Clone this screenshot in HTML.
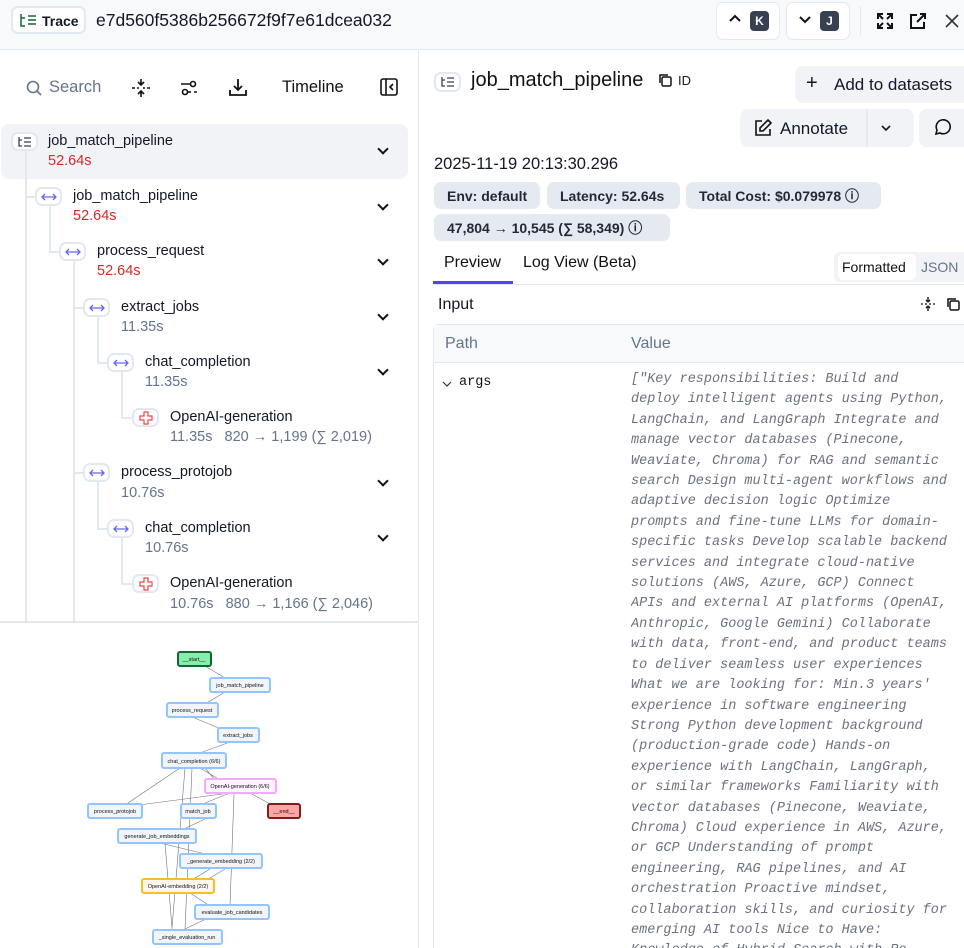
<!DOCTYPE html>
<html style="width:964px;height:948px;overflow:hidden"><head><meta charset="utf-8"><style>
*{box-sizing:border-box;margin:0;padding:0}
body{width:964px;height:948px;overflow:hidden;background:#fff;font-family:"Liberation Sans",sans-serif;color:#111827;position:relative}
.a{position:absolute;white-space:nowrap}
.ib{position:absolute;width:27px;height:19px;border:2px solid #e2e8f0;border-radius:7px;background:#fff;display:flex;align-items:center;justify-content:center}
.nm{font-size:14.5px;color:#111827}
.red{font-size:14.5px;color:#dc2626}
.gr{font-size:14.5px;color:#64748b}
.vl{position:absolute;width:1.5px;background:#e2e8f0}
.hl{position:absolute;height:1.5px;background:#e2e8f0}
.chev{position:absolute;width:8px;height:8px;border-right:2px solid #111;border-bottom:2px solid #111;transform:rotate(45deg)}
.badge{position:absolute;height:27px;background:#e5e9f0;border-radius:7px;font-size:14px;font-weight:bold;color:#1f2937;display:flex;align-items:center;padding-left:13px}
.code{position:absolute;left:631px;top:370px;height:578px;overflow:hidden;font-family:"Liberation Mono",monospace;font-style:italic;font-size:13.5px;line-height:20.4px;color:#6b7280;white-space:pre}
</style></head><body>
<!-- header -->
<div class="a" style="left:0;top:0;width:964px;height:50px;background:#f8f9fb;border-bottom:1px solid #e2e8f0"></div>
<div class="a" style="left:11px;top:6px;width:75px;height:28px;border:2px solid #e2e8f0;border-radius:7px;background:#fff;font-size:14px;font-weight:bold;padding:5px 0 0 29px">Trace</div>
<svg class="a" style="left:19px;top:14px" width="18" height="13" viewBox="0 0 18 13" fill="none" stroke="#166534" stroke-width="1.5"><path d="M2 0v12h4M2 4h4M9 2h8M9 6h8M9 10h8"/></svg>
<div class="a" style="left:96px;top:10px;font-size:17.5px">e7d560f5386b256672f9f7e61dcea032</div>
<div class="a" style="left:716px;top:2px;width:64px;height:38px;border:1px solid #e2e8f0;border-radius:7px;background:#fff"></div>
<div class="a" style="left:786px;top:2px;width:64px;height:38px;border:1px solid #e2e8f0;border-radius:7px;background:#fff"></div>
<svg class="a" style="left:728px;top:14px" width="14" height="10"><path d="M2 7l5-5 5 5" stroke="#111" stroke-width="2" fill="none"/></svg>
<svg class="a" style="left:798px;top:14px" width="14" height="10"><path d="M2 3l5 5 5-5" stroke="#111" stroke-width="2" fill="none"/></svg>
<div class="a" style="left:750px;top:11px;width:19px;height:20px;background:#374151;border-radius:4px;color:#fff;font-size:12px;font-weight:bold;text-align:center;line-height:20px">K</div>
<div class="a" style="left:820px;top:11px;width:19px;height:20px;background:#374151;border-radius:4px;color:#fff;font-size:12px;font-weight:bold;text-align:center;line-height:20px">J</div>
<div class="a" style="left:860px;top:6px;width:1px;height:29px;background:#e2e8f0"></div>
<svg class="a" style="left:876px;top:12px" width="18" height="18" fill="none" stroke="#111" stroke-width="2"><path d="M2 7V2h5M2 2l5 5M16 7V2h-5M16 2l-5 5M2 11v5h5M2 16l5-5M16 11v5h-5M16 16l-5-5"/></svg>
<svg class="a" style="left:909px;top:12px" width="18" height="18" fill="none" stroke="#111" stroke-width="2"><path d="M8 3H2v13h13v-6M11 2h5v5M16 2l-8 8"/></svg>
<svg class="a" style="left:945px;top:14px" width="14" height="14" stroke="#333" stroke-width="1.6"><path d="M1 1l12 12M13 1L1 13"/></svg>
<div class="a" style="left:418px;top:50px;width:1px;height:898px;background:#e2e8f0"></div>

<!-- left toolbar -->
<svg class="a" style="left:26px;top:80px" width="16" height="16" fill="none" stroke="#64748b" stroke-width="1.6"><circle cx="7" cy="7" r="5.5"/><path d="M11 11l4 4"/></svg>
<div class="a" style="left:49px;top:78px;font-size:16.5px;color:#64748b">Search</div>
<svg class="a" style="left:131px;top:78px" width="20" height="20" fill="none" stroke="#111" stroke-width="1.6"><path d="M10 1v6M7 4l3 3 3-3M10 19v-6M7 16l3-3 3 3M1 10h3M6 10h2M12 10h2M16 10h3"/></svg>
<svg class="a" style="left:180px;top:79px" width="18" height="18" fill="none" stroke="#111" stroke-width="1.6"><path d="M1 5h9M14 13h3"/><circle cx="13" cy="5" r="2.5"/><circle cx="5" cy="13" r="2.5"/><path d="M8 13h3"/></svg>
<svg class="a" style="left:229px;top:78px" width="18" height="18" fill="none" stroke="#111" stroke-width="1.8"><path d="M9 1v11M5 8l4 4 4-4M1 12v5h16v-5"/></svg>
<div class="a" style="left:282px;top:78px;font-size:16.5px;color:#111">Timeline</div>
<svg class="a" style="left:380px;top:78px" width="19" height="19" fill="none" stroke="#111" stroke-width="1.6"><rect x="1" y="1" width="16" height="16" rx="2"/><path d="M6 1v16M13 6l-3 3 3 3"/></svg>

<!-- tree -->
<div class="a" style="left:1px;top:124px;width:407px;height:55px;background:#f1f3f6;border-radius:8px"></div>
<div class="vl" style="left:25px;top:150px;height:471px"></div>
<div class="hl" style="left:25px;top:196px;width:10px"></div>
<div class="vl" style="left:49px;top:205px;height:46px"></div>
<div class="hl" style="left:49px;top:251px;width:11px"></div>
<div class="vl" style="left:73px;top:260px;height:361px"></div>
<div class="hl" style="left:73px;top:307px;width:11px"></div>
<div class="hl" style="left:73px;top:472px;width:11px"></div>
<div class="vl" style="left:97px;top:316px;height:46px"></div>
<div class="hl" style="left:97px;top:362px;width:11px"></div>
<div class="vl" style="left:121px;top:371px;height:46px"></div>
<div class="hl" style="left:121px;top:417px;width:11px"></div>
<div class="vl" style="left:97px;top:481px;height:47px"></div>
<div class="hl" style="left:97px;top:528px;width:11px"></div>
<div class="vl" style="left:121px;top:537px;height:46px"></div>
<div class="hl" style="left:121px;top:583px;width:11px"></div>

<div class="ib" style="left:11px;top:132px"><svg width="14" height="10" fill="none" stroke="#334155" stroke-width="1.3"><path d="M1 0v9h3M1 3h3M6 1h7M6 5h7M6 9h7"/></svg></div>
<div class="a nm" style="left:48px;top:133px">job_match_pipeline</div>
<div class="a red" style="left:48px;top:153px">52.64s</div>

<div class="ib" style="left:35px;top:187px"><svg width="16" height="8" fill="none" stroke="#6366f1" stroke-width="1.3"><path d="M1 4h14M4 1L1 4l3 3M12 1l3 3-3 3"/></svg></div>
<div class="a nm" style="left:73px;top:188px">job_match_pipeline</div>
<div class="a red" style="left:73px;top:208px">52.64s</div>

<div class="ib" style="left:59px;top:242px"><svg width="16" height="8" fill="none" stroke="#6366f1" stroke-width="1.3"><path d="M1 4h14M4 1L1 4l3 3M12 1l3 3-3 3"/></svg></div>
<div class="a nm" style="left:97px;top:243px">process_request</div>
<div class="a red" style="left:97px;top:263px">52.64s</div>

<div class="ib" style="left:83px;top:298px"><svg width="16" height="8" fill="none" stroke="#6366f1" stroke-width="1.3"><path d="M1 4h14M4 1L1 4l3 3M12 1l3 3-3 3"/></svg></div>
<div class="a nm" style="left:121px;top:299px">extract_jobs</div>
<div class="a gr" style="left:121px;top:319px">11.35s</div>

<div class="ib" style="left:107px;top:353px"><svg width="16" height="8" fill="none" stroke="#6366f1" stroke-width="1.3"><path d="M1 4h14M4 1L1 4l3 3M12 1l3 3-3 3"/></svg></div>
<div class="a nm" style="left:145px;top:354px">chat_completion</div>
<div class="a gr" style="left:145px;top:374px">11.35s</div>

<div class="ib" style="left:132px;top:408px"><svg width="14" height="14" fill="none" stroke="#ef4444" stroke-width="1.2"><path d="M5 1h4v4h4v4H9v4H5V9H1V5h4z"/></svg></div>
<div class="a nm" style="left:170px;top:409px">OpenAI-generation</div>
<div class="a gr" style="left:170px;top:429px">11.35s &nbsp;&nbsp;820 → 1,199 (∑ 2,019)</div>

<div class="ib" style="left:83px;top:463px"><svg width="16" height="8" fill="none" stroke="#6366f1" stroke-width="1.3"><path d="M1 4h14M4 1L1 4l3 3M12 1l3 3-3 3"/></svg></div>
<div class="a nm" style="left:121px;top:464px">process_protojob</div>
<div class="a gr" style="left:121px;top:485px">10.76s</div>

<div class="ib" style="left:107px;top:519px"><svg width="16" height="8" fill="none" stroke="#6366f1" stroke-width="1.3"><path d="M1 4h14M4 1L1 4l3 3M12 1l3 3-3 3"/></svg></div>
<div class="a nm" style="left:145px;top:520px">chat_completion</div>
<div class="a gr" style="left:145px;top:540px">10.76s</div>

<div class="ib" style="left:132px;top:574px"><svg width="14" height="14" fill="none" stroke="#ef4444" stroke-width="1.2"><path d="M5 1h4v4h4v4H9v4H5V9H1V5h4z"/></svg></div>
<div class="a nm" style="left:170px;top:575px">OpenAI-generation</div>
<div class="a gr" style="left:170px;top:596px">10.76s &nbsp;&nbsp;880 → 1,166 (∑ 2,046)</div>

<div class="chev" style="left:379px;top:145px"></div>
<div class="chev" style="left:379px;top:201px"></div>
<div class="chev" style="left:379px;top:256px"></div>
<div class="chev" style="left:379px;top:311px"></div>
<div class="chev" style="left:379px;top:366px"></div>
<div class="chev" style="left:379px;top:477px"></div>
<div class="chev" style="left:379px;top:532px"></div>
<div class="a" style="left:0;top:621px;width:418px;height:2px;background:#e2e8f0"></div>

<!-- graph -->
<svg class="a" style="left:0;top:623px" width="418" height="325" font-family="Liberation Sans" font-size="5.5" text-anchor="middle">
<g stroke="#6b7280" stroke-width="0.6" fill="none">
<path d="M205 43l20 12M225 69l-20 12M192 94l27 11M230 119l-30 11M200 145l20 12M215 157l-10-12M180 145l-55 37M230 170l-91 12M230 170l-30 12M250 170l22 12M205 196l-25 12M160 220l50 12M225 246l-20 12M210 246l-20 12M190 270l20 13M230 283l4-112M165 220l8 97M185 145l-13 160M192 145l-7 162M210 294l-25 12"/>
</g>
<g stroke-width="2">
<rect x="178" y="29" width="33" height="14" rx="2" fill="#86efac" stroke="#166534"/>
<rect x="210" y="55" width="60" height="14" rx="2" fill="#f1f5f9" stroke="#93c5fd"/>
<rect x="167" y="80" width="51" height="14" rx="2" fill="#f1f5f9" stroke="#93c5fd"/>
<rect x="218" y="105" width="41" height="14" rx="2" fill="#f1f5f9" stroke="#93c5fd"/>
<rect x="162" y="130" width="64" height="15" rx="2" fill="#f1f5f9" stroke="#93c5fd"/>
<rect x="205" y="156" width="71" height="14" rx="2" fill="#fdf4ff" stroke="#f0abfc"/>
<rect x="88" y="181" width="54" height="14" rx="2" fill="#f1f5f9" stroke="#93c5fd"/>
<rect x="181" y="181" width="35" height="14" rx="2" fill="#f1f5f9" stroke="#93c5fd"/>
<rect x="268" y="181" width="32" height="14" rx="2" fill="#fca5a5" stroke="#7f1d1d"/>
<rect x="118" y="206" width="78" height="14" rx="2" fill="#f1f5f9" stroke="#93c5fd"/>
<rect x="180" y="231" width="82" height="14" rx="2" fill="#f1f5f9" stroke="#93c5fd"/>
<rect x="142" y="256" width="72" height="14" rx="2" fill="#fff7ed" stroke="#fbbf24"/>
<rect x="195" y="282" width="74" height="14" rx="2" fill="#f1f5f9" stroke="#93c5fd"/>
<rect x="153" y="307" width="69" height="14" rx="2" fill="#f1f5f9" stroke="#93c5fd"/>
</g>
<g fill="#111">
<text x="194" y="38">__start__</text><text x="240" y="64">job_match_pipeline</text><text x="192" y="89">process_request</text><text x="238" y="114">extract_jobs</text><text x="194" y="140">chat_completion (6/6)</text><text x="240" y="165">OpenAI-generation (6/6)</text><text x="115" y="190">process_protojob</text><text x="198" y="190">match_job</text><text x="284" y="190">__end__</text><text x="157" y="215">generate_job_embeddings</text><text x="221" y="240">_generate_embedding (2/2)</text><text x="178" y="265">OpenAI-embedding (2/2)</text><text x="232" y="291">evaluate_job_candidates</text><text x="187" y="316">_single_evaluation_run</text>
</g></svg>

<!-- right panel -->
<div class="ib" style="left:434px;top:72px;width:27px;height:20px"><svg width="14" height="10" fill="none" stroke="#334155" stroke-width="1.3"><path d="M1 0v9h3M1 3h3M6 1h7M6 5h7M6 9h7"/></svg></div>
<div class="a" style="left:471px;top:69px;font-size:20px;color:#111">job_match_pipeline</div>
<svg class="a" style="left:658px;top:73px" width="14" height="14" fill="none" stroke="#111" stroke-width="1.5"><rect x="4" y="4" width="9" height="9" rx="1.5"/><path d="M2 10V2h8"/></svg>
<div class="a" style="left:678px;top:73px;font-size:13px">ID</div>
<div class="a" style="left:795px;top:66px;width:169px;height:37px;background:#f1f3f6;border-radius:8px 0 0 8px"></div>
<div class="a" style="left:806px;top:72px;font-size:20px">+</div>
<div class="a" style="left:834px;top:75px;font-size:17px">Add to datasets</div>
<div class="a" style="left:740px;top:109px;width:174px;height:38px;background:#f1f3f6;border-radius:8px"></div>
<div class="a" style="left:866px;top:109px;width:2px;height:38px;background:#e2e8f0"></div>
<svg class="a" style="left:754px;top:119px" width="18" height="18" fill="none" stroke="#111" stroke-width="1.6"><path d="M8 2H2v14h14v-6M14 1l3 3-8 8H6V9z"/></svg>
<div class="a" style="left:780px;top:119px;font-size:17px">Annotate</div>
<svg class="a" style="left:880px;top:124px" width="12" height="8"><path d="M2 2l4 4 4-4" stroke="#111" stroke-width="1.6" fill="none"/></svg>
<div class="a" style="left:919px;top:109px;width:45px;height:38px;background:#f1f3f6;border-radius:8px 0 0 8px"></div>
<svg class="a" style="left:933px;top:119px" width="19" height="19" fill="none" stroke="#111" stroke-width="1.6"><path d="M3 15l1-4a7 7 0 1 1 3 3z"/></svg>
<div class="a" style="left:434px;top:155px;font-size:16.5px">2025-11-19 20:13:30.296</div>
<div class="badge" style="left:434px;top:182px;width:106px">Env: default</div>
<div class="badge" style="left:547px;top:182px;width:133px">Latency: 52.64s</div>
<div class="badge" style="left:686px;top:182px;width:195px">Total Cost: $0.079978 ⓘ</div>
<div class="badge" style="left:434px;top:214px;width:236px">47,804 → 10,545 (∑ 58,349) ⓘ</div>
<div class="a" style="left:444px;top:254px;font-size:16px;color:#111">Preview</div>
<div class="a" style="left:523px;top:254px;font-size:16px;color:#111">Log View (Beta)</div>
<div class="a" style="left:433px;top:284px;width:531px;height:1px;background:#e2e8f0"></div>
<div class="a" style="left:433px;top:281px;width:80px;height:3px;background:#4f46e5"></div>
<div class="a" style="left:834px;top:252px;width:130px;height:30px;background:#f1f3f6;border-radius:6px 0 0 6px"></div>
<div class="a" style="left:838px;top:254px;width:78px;height:26px;background:#fff;border-radius:5px"></div>
<div class="a" style="left:842px;top:259px;font-size:14px;color:#111">Formatted</div>
<div class="a" style="left:921px;top:259px;font-size:14px;color:#64748b">JSON</div>
<div class="a" style="left:438px;top:296px;font-size:16px">Input</div>
<svg class="a" style="left:921px;top:297px" width="14" height="14" fill="none" stroke="#111" stroke-width="1.3"><path d="M7 0v4M5 3l2 2 2-2M7 14v-4M5 11l2-2 2 2M0 7h2M4 7h2M8 7h2M12 7h2"/></svg>
<svg class="a" style="left:946px;top:297px" width="14" height="14" fill="none" stroke="#111" stroke-width="1.5"><rect x="4" y="4" width="9" height="9" rx="1.5"/><path d="M2 10V2h8"/></svg>
<div class="a" style="left:433px;top:324px;width:531px;height:624px;border:1px solid #e2e8f0;border-right:none;border-bottom:none;border-radius:6px 0 0 0"></div>
<div class="a" style="left:434px;top:325px;width:530px;height:38px;background:#f8f9fb;border-bottom:1px solid #e2e8f0"></div>
<div class="a" style="left:445px;top:335px;font-size:16px;color:#64748b">Path</div>
<div class="a" style="left:631px;top:335px;font-size:16px;color:#64748b">Value</div>
<svg class="a" style="left:442px;top:381px" width="10" height="7"><path d="M1 1l4 4 4-4" stroke="#333" stroke-width="1.2" fill="none"/></svg>
<div class="a" style="left:459px;top:375px;font-family:'Liberation Mono',monospace;font-size:13.5px;color:#111">args</div>
<div class="code">["Key responsibilities: Build and
deploy intelligent agents using Python,
LangChain, and LangGraph Integrate and
manage vector databases (Pinecone,
Weaviate, Chroma) for RAG and semantic
search Design multi-agent workflows and
adaptive decision logic Optimize
prompts and fine-tune LLMs for domain-
specific tasks Develop scalable backend
services and integrate cloud-native
solutions (AWS, Azure, GCP) Connect
APIs and external AI platforms (OpenAI,
Anthropic, Google Gemini) Collaborate
with data, front-end, and product teams
to deliver seamless user experiences
What we are looking for: Min.3 years'
experience in software engineering
Strong Python development background
(production-grade code) Hands-on
experience with LangChain, LangGraph,
or similar frameworks Familiarity with
vector databases (Pinecone, Weaviate,
Chroma) Cloud experience in AWS, Azure,
or GCP Understanding of prompt
engineering, RAG pipelines, and AI
orchestration Proactive mindset,
collaboration skills, and curiosity for
emerging AI tools Nice to Have:
Knowledge of Hybrid Search with Re-</div>
</body></html>
